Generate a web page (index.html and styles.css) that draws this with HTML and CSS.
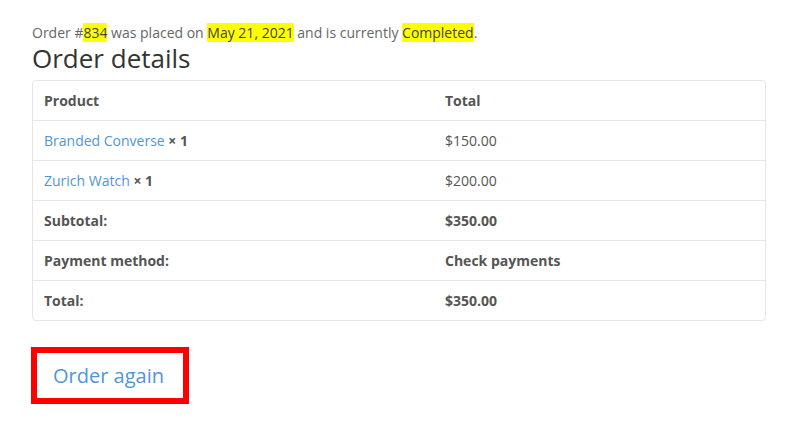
FILE: index.html
```html
<!DOCTYPE html>
<html lang="en">
<head>
  <meta charset="UTF-8" />
  <title>Order #834</title>
  <link rel="stylesheet" href="styles.css">
</head>
<body>
  <div class="container">
    <p class="order-status">
      Order #<mark>834</mark> was placed on <mark>May 21, 2021</mark> and is currently <mark>Completed</mark>.
    </p>

    <h2 class="details-title">Order details</h2>

    <table class="order-table">
      <thead>
        <tr>
          <th class="col-product">Product</th>
          <th>Total</th>
        </tr>
      </thead>
      <tbody>
        <tr>
          <td><a href="#">Branded Converse</a> <strong class="qty">&times;&nbsp;1</strong></td>
          <td>$150.00</td>
        </tr>
        <tr>
          <td><a href="#">Zurich Watch</a> <strong class="qty">&times;&nbsp;1</strong></td>
          <td>$200.00</td>
        </tr>
      </tbody>
      <tfoot>
        <tr>
          <th>Subtotal:</th>
          <td>$350.00</td>
        </tr>
        <tr>
          <th>Payment method:</th>
          <td>Check payments</td>
        </tr>
        <tr>
          <th>Total:</th>
          <td>$350.00</td>
        </tr>
      </tfoot>
    </table>

    <div class="order-again">
      <a href="#" class="button">Order again</a>
    </div>
  </div>
</body>
</html>
```

FILE: styles.css
```css
body {
  font-family: 'Open Sans', sans-serif;
  font-size: 14px;
  background: #fff;
  color: #666;
  margin: 0;
  padding: 0;
}

.container {
  padding: 21px 23px 0 32px;
}

.order-status {
  margin: 0;
  line-height: 24px;
}

.order-status mark {
  background: #ffff00;
  color: #444;
}

.details-title {
  margin: 0 0 9px;
  font-size: 26px;
  font-weight: 400;
  line-height: 26px;
  color: #333;
}

.order-table {
  width: 100%;
  border-collapse: separate;
  border-spacing: 0;
  border: 1px solid #e6e6e6;
  border-radius: 4px;
  color: #555;
}

.order-table th,
.order-table td {
  text-align: left;
  padding: 0 11px;
  height: 39px;
  border-top: 1px solid #e6e6e6;
  font-weight: 400;
}

.order-table thead th {
  border-top: none;
}

.order-table thead th,
.order-table tfoot th,
.order-table tfoot td {
  font-weight: 700;
}

.col-product {
  width: 379px;
}

.order-table a {
  color: #4f96d8;
  text-decoration: none;
}

.qty {
  font-weight: 700;
}

.order-again {
  margin-top: 26px;
}

.button {
  display: inline-block;
  border: 6px solid #ff0000;
  padding: 0 19px 0 16px;
  line-height: 45px;
  font-size: 20px;
  color: #4f96d8;
  text-decoration: none;
  margin-left: -1px;
}
```
